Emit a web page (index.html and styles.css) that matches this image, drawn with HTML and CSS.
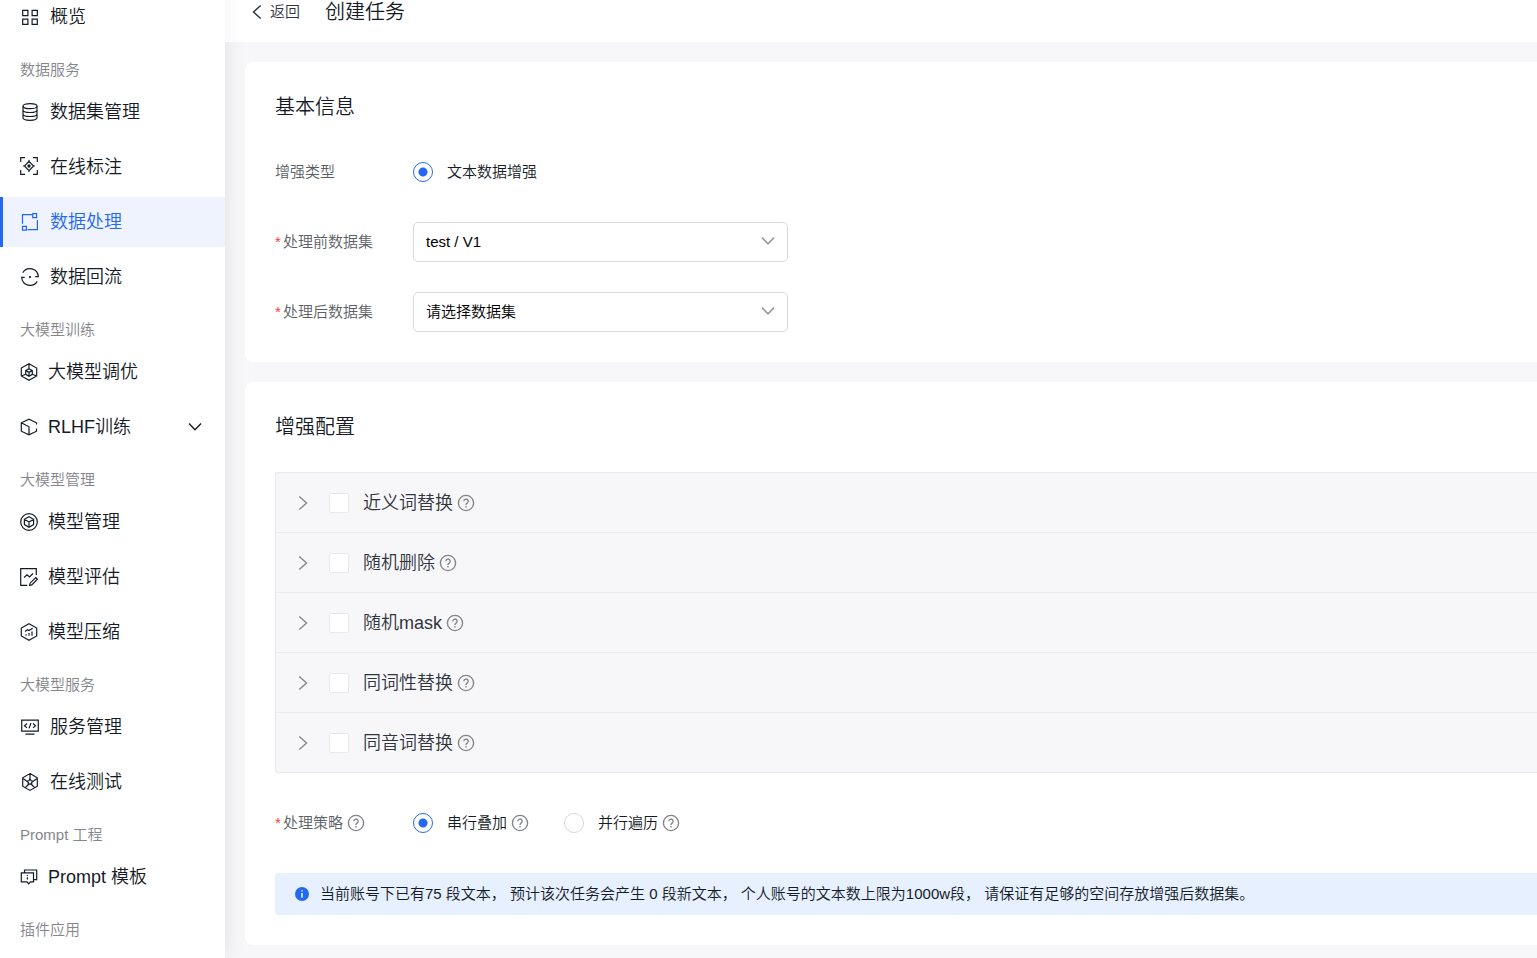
FILE: index.html
```html
<!DOCTYPE html>
<html lang="zh-CN">
<head>
<meta charset="utf-8">
<meta name="viewport" content="width=device-width, initial-scale=1">
<title>创建任务</title>
<link rel="stylesheet" href="styles.css">
</head>
<body>
<svg class="defs" aria-hidden="true">
  <symbol id="help" viewBox="0 0 18 18">
    <circle cx="9" cy="9" r="7.6"/>
    <path d="M6.8 7.3a2.2 2.2 0 1 1 3.3 1.9c-.8.45-1.1.8-1.1 1.7M9 12v1.4"/>
  </symbol>
  <symbol id="right" viewBox="0 0 10 16"><path d="M1.3 1.5 8.5 8l-7.2 6.5"/></symbol>
  <symbol id="down" viewBox="0 0 14 10"><path d="M1 1.6 7 7.8l6-6.2"/></symbol>
</svg>
<div class="app">
  <aside class="sidebar">
    <nav class="nav">
      <a class="item" href="#">
        <svg class="icon" viewBox="0 0 20 20"><path d="M2.7 3.4h5.2v5.2H2.7zM12.1 3.4h5.2v5.2h-5.2zM2.7 12.2h5.2v5.2H2.7zM12.1 12.2h5.2v5.2h-5.2z"/></svg>
        概览</a>
      <h2 class="group">数据服务</h2>
      <a class="item" href="#">
        <svg class="icon" viewBox="0 0 20 20"><ellipse cx="10" cy="4.2" rx="7" ry="2.5"/><path d="M3 4.2v11.6c0 1.4 3.1 2.5 7 2.5s7-1.1 7-2.5V4.2M3 8c0 1.4 3.1 2.5 7 2.5S17 9.4 17 8M3 12c0 1.4 3.1 2.5 7 2.5s7-1.1 7-2.5"/></svg>
        数据集管理</a>
      <a class="item" href="#">
        <svg class="icon" viewBox="0 0 20 20"><path d="M.7 5V.7H5M13 .7h4.3V5M17.3 13v4.3H13M5 17.300H.7V13M9 3v1.600M9 13.400V15M3 9h1.600M13.400 9H15M9 4.400 13.600 9 9 13.600 4.400 9z"/><circle cx="9" cy="9" r="1.100" class="solid"/></svg>
        在线标注</a>
      <a class="item active" href="#" aria-current="page">
        <svg class="icon" viewBox="0 0 20 20"><path d="M12 2.700H2.500v9M17.400 8v9.600H7.500M12.700 1.700h3.900v3.900h-3.900zM2.500 14.300h3.900v3.900H2.500z"/></svg>
        数据处理</a>
      <a class="item" href="#">
        <svg class="icon" viewBox="0 0 20 20"><path d="M2.800 5.600A8.400 8.400 0 0 1 18.300 9.700h-3M17.200 14.400A8.400 8.400 0 0 1 1.700 10.300h3"/><circle cx="10" cy="10" r=".5" class="solid"/></svg>
        数据回流</a>
      <h2 class="group">大模型训练</h2>
      <a class="item" href="#">
        <svg class="icon small" viewBox="0 0 18 18"><path d="M9 .8l7.700 4.200v8L9 17.200 1.300 13V5zM9 5.800l3.300 1.800v3.700L9 13.200l-3.300-1.900V7.600zM5.700 7.600 9 9.400l3.300-1.800M9 9.400v3.800M9 1v4.800M5.700 11.300 1.500 13M12.300 11.300l4.200 1.700"/></svg>
        大模型调优</a>
      <button class="item" type="button" aria-expanded="false">
        <svg class="icon small" viewBox="0 0 18 18"><path d="M16.500 6.500V4.800L9 1.200 1.300 4.800v8.400L9 16.800l7.500-3.600V10.500M1.300 4.800 9 8.800v8"/></svg>
        <span class="grow">RLHF训练</span>
        <svg class="caret" viewBox="0 0 14 10"><use href="#down"/></svg>
      </button>
      <h2 class="group">大模型管理</h2>
      <a class="item" href="#">
        <svg class="icon small" viewBox="0 0 18 18"><circle cx="9" cy="9" r="8.300"/><path d="M9 3.700l4.600 2.600v5.300L9 14.300l-4.600-2.700V6.300zM4.400 6.300 9 9l4.600-2.700M9 9v5.300"/></svg>
        模型管理</a>
      <a class="item" href="#">
        <svg class="icon small" viewBox="0 0 18 18"><path d="M16.300 7V.7H.7v16.600h6.600M4 9.500l3-2.600 2.500 2L13 5.500M15.700 9.500l1.700 1.700-5.600 5.700-2.200.5.500-2.200z"/></svg>
        模型评估</a>
      <a class="item" href="#">
        <svg class="icon small" viewBox="0 0 18 18"><path d="M9 .8l7.700 4.200v8L9 17.200 1.300 13V5zM5 8.500l2.500-1.700 1.500.7 3.700-2.300M6 12.700v-1.500M9 12.700V10M12 12.700V8.500"/></svg>
        模型压缩</a>
      <h2 class="group">大模型服务</h2>
      <a class="item" href="#">
        <svg class="icon" viewBox="0 0 20 20"><path d="M1.700 3.200h16.600v10.900H1.700zM5.500 17.200h9M7 6.500 4.500 8.700 7 10.900M13 6.500l2.500 2.200-2.500 2.200M11 6l-2 5.400"/></svg>
        服务管理</a>
      <a class="item" href="#">
        <svg class="icon" viewBox="0 0 20 20"><path d="M10 1.600l7.300 4.200v8.400L10 18.400l-7.300-4.200V5.800zM10 2v4.500M13.500 9l3.500-2.500M12 13l2.600 2.700M8 13l-2.600 2.700M6.500 9 3 6.500M10 6.500l1 2.300 2.500.2-1.900 1.600.4 2.400-2-1.300L8 13l.4-2.400L6.500 9l2.500-.2z"/></svg>
        在线测试</a>
      <h2 class="group">Prompt 工程</h2>
      <a class="item" href="#">
        <svg class="icon small" viewBox="0 0 18 18"><path d="M1.300 4.800h12.200v9h-3L8.700 15.900 7 13.800H1.300zM4.500 4.800V2h12.200v9.600h-3.200M7.400 7v1M7.400 9.200v2.400"/></svg>
        Prompt 模板</a>
      <h2 class="group">插件应用</h2>
    </nav>
  </aside>

  <main class="main">
    <header class="header">
      <a class="back" href="#"><svg class="arrow flip" viewBox="0 0 10 16"><use href="#right"/></svg>返回</a>
      <h1 class="title">创建任务</h1>
    </header>
    <form class="content">
      <section class="card">
        <h2 class="title">基本信息</h2>
        <div class="row" role="radiogroup" aria-labelledby="type-label">
          <span class="label" id="type-label">增强类型</span>
          <label class="choice"><input class="radio" type="radio" name="type" checked>文本数据增强</label>
        </div>
        <div class="row">
          <label class="label" for="before"><span class="star">*</span>处理前数据集</label>
          <div class="select-box">
            <select class="select" id="before"><option>test / V1</option></select>
            <svg class="select-caret" viewBox="0 0 14 10"><use href="#down"/></svg>
          </div>
        </div>
        <div class="row">
          <label class="label" for="after"><span class="star">*</span>处理后数据集</label>
          <div class="select-box">
            <select class="select" id="after"><option>请选择数据集</option></select>
            <svg class="select-caret" viewBox="0 0 14 10"><use href="#down"/></svg>
          </div>
        </div>
      </section>

      <section class="card">
        <h2 class="title">增强配置</h2>
        <div class="options">
          <div class="option">
            <button class="expand" type="button" aria-label="展开"><svg class="arrow" viewBox="0 0 10 16"><use href="#right"/></svg></button>
            <label class="check-label"><input class="check" type="checkbox">近义词替换</label>
            <svg class="help" viewBox="0 0 18 18"><use href="#help"/></svg>
          </div>
          <div class="option">
            <button class="expand" type="button" aria-label="展开"><svg class="arrow" viewBox="0 0 10 16"><use href="#right"/></svg></button>
            <label class="check-label"><input class="check" type="checkbox">随机删除</label>
            <svg class="help" viewBox="0 0 18 18"><use href="#help"/></svg>
          </div>
          <div class="option">
            <button class="expand" type="button" aria-label="展开"><svg class="arrow" viewBox="0 0 10 16"><use href="#right"/></svg></button>
            <label class="check-label"><input class="check" type="checkbox">随机mask</label>
            <svg class="help" viewBox="0 0 18 18"><use href="#help"/></svg>
          </div>
          <div class="option">
            <button class="expand" type="button" aria-label="展开"><svg class="arrow" viewBox="0 0 10 16"><use href="#right"/></svg></button>
            <label class="check-label"><input class="check" type="checkbox">同词性替换</label>
            <svg class="help" viewBox="0 0 18 18"><use href="#help"/></svg>
          </div>
          <div class="option">
            <button class="expand" type="button" aria-label="展开"><svg class="arrow" viewBox="0 0 10 16"><use href="#right"/></svg></button>
            <label class="check-label"><input class="check" type="checkbox">同音词替换</label>
            <svg class="help" viewBox="0 0 18 18"><use href="#help"/></svg>
          </div>
        </div>
        <div class="row" role="radiogroup" aria-labelledby="strategy-label">
          <span class="label" id="strategy-label"><span class="star">*</span>处理策略<svg class="help" viewBox="0 0 18 18"><use href="#help"/></svg></span>
          <div class="choices">
            <label class="choice"><input class="radio" type="radio" name="strategy" checked><span class="with-help">串行叠加<svg class="help" viewBox="0 0 18 18"><use href="#help"/></svg></span></label>
            <label class="choice"><input class="radio" type="radio" name="strategy"><span class="with-help">并行遍历<svg class="help" viewBox="0 0 18 18"><use href="#help"/></svg></span></label>
          </div>
        </div>
        <p class="notice">
          <svg class="info" viewBox="0 0 14 14"><circle cx="7" cy="7" r="7"/><path d="M7 3.200v1.300M7 6v4.800"/></svg>
          <span>当前账号下已有75 段文本， 预计该次任务会产生 0 段新文本， 个人账号的文本数上限为1000w段， 请保证有足够的空间存放增强后数据集。</span>
        </p>
      </section>
    </form>
  </main>
</div>
</body>
</html>
```

FILE: styles.css
```css
* { box-sizing: border-box; }

body {
  margin: 0;
  background: #f7f7f9;
  color: #151b26;
  font-family: "Liberation Sans", "Noto Sans CJK SC", sans-serif;
  font-size: 15px;
  font-weight: 350;
  line-height: 20px;
}

h1, h2, p { margin: 0; font-weight: 350; }
a { color: inherit; text-decoration: none; }
button, select { font: inherit; color: inherit; }
svg { flex: none; fill: none; stroke: currentColor; }
.defs { display: none; }

.app { display: flex; min-height: 100vh; overflow: hidden; }

/* Sidebar */
.sidebar {
  position: relative;
  flex: none;
  width: 225px;
  background: #fff;
  box-shadow: 0 0 20px rgba(7, 12, 20, .1);
}
.nav { display: flex; flex-direction: column; margin-top: -8px; }
.item {
  display: flex;
  align-items: center;
  gap: 10px;
  height: 50px;
  padding: 0 20px;
  border: 0;
  background: none;
  font-size: 18px;
  text-align: left;
}
.item + .item { margin-top: 5px; }
.active { background: #eef3fe; color: #2468f2; box-shadow: inset 3px 0 #2468f2; }
.icon { width: 20px; height: 20px; stroke-width: 1.2; }
.small { width: 18px; height: 18px; }
.solid { fill: currentColor; }
.grow { flex: 1; }
.caret { width: 14px; height: 10px; margin-right: 3px; stroke-width: 1.4; }
.group {
  height: 45px;
  padding: 10px 20px 0;
  color: #84868c;
  font-size: 15px;
  line-height: 35px;
}

/* Page header */
.main { flex: 1; min-width: 0; }
.header {
  position: relative;
  display: flex;
  align-items: center;
  gap: 25px;
  height: 42px;
  padding: 0 27px 18px;
  background: linear-gradient(to right, #f9f9fa, #fff 16px);
}
.back { display: flex; align-items: center; gap: 8px; color: #303540; }
.arrow { display: block; width: 10px; height: 16px; stroke-width: 1.4; }
.flip { transform: scaleX(-1); }
.title { font-size: 20px; line-height: 30px; }

/* Cards */
.content { display: flex; flex-direction: column; gap: 20px; padding: 20px 0 13px 20px; }
.card {
  position: relative;
  display: flex;
  flex-direction: column;
  gap: 30px;
  padding: 30px 0 30px 30px;
  border-radius: 8px 0 0 8px;
  background: #fff;
}
.row { display: flex; align-items: center; min-height: 40px; }
.label { display: flex; align-items: center; flex: none; width: 138px; color: #5c5f66; }
.star { width: 8px; color: #f33e3e; }
.choices { display: flex; gap: 35px; }
.choice { display: flex; align-items: center; gap: 14px; }
.with-help { display: flex; align-items: center; }
.help { width: 18px; height: 18px; margin-left: 4px; color: #84868c; stroke-width: 1.4; }

.radio, .check {
  appearance: none;
  flex: none;
  width: 20px;
  height: 20px;
  margin: 0;
  border: 1px solid #d4d6d9;
  background: #fff;
}
.radio { border-radius: 50%; }
.radio:checked {
  border-color: #2468f2;
  background: radial-gradient(circle, #2468f2 4px, #fff 5px);
}
.check { border-color: #e8e9eb; border-radius: 2px; }

.select-box { position: relative; width: 375px; }
.select {
  appearance: none;
  display: block;
  width: 100%;
  height: 40px;
  padding: 0 40px 0 12px;
  border: 1px solid #d9dadc;
  border-radius: 5px;
  background: #fff;
  color: #000;
}
.select-caret {
  position: absolute;
  top: 14px;
  right: 13px;
  width: 14px;
  height: 10px;
  color: #999;
  stroke-width: 1.6;
  pointer-events: none;
}

/* Augmentation list */
.options {
  border: 1px solid #e8e9eb;
  border-right: 0;
  border-radius: 3px 0 0 3px;
  background: #f7f7f9;
}
.option { display: flex; align-items: center; height: 60px; padding-left: 22px; color: #303540; font-size: 18px; }
.option + .option { border-top: 1px solid #e8e9eb; }
.option:first-child { height: 59px; }
.expand { margin-right: 21px; padding: 0; border: 0; background: none; color: #84868c; }
.check-label { display: flex; align-items: center; gap: 14px; }

/* Notice */
.notice {
  display: flex;
  align-items: center;
  gap: 11px;
  min-height: 42px;
  padding: 0 20px;
  border-radius: 4px 0 0 4px;
  background: #e6f0ff;
}
.info { width: 14px; height: 14px; fill: #2468f2; stroke: none; }
.info path { stroke: #fff; stroke-width: 1.4; }
```
